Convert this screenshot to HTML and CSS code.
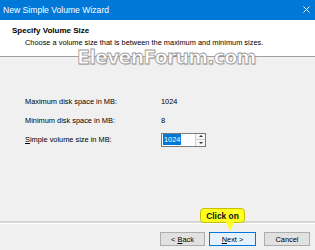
FILE: index.html
```html
<!DOCTYPE html>
<html>
<head>
    <title>New Simple Volume Wizard</title>
    <link rel="stylesheet" href="styles.css">
</head>
<body>
    <div class="window">
        <div class="titlebar">
            <span class="title">New Simple Volume Wizard</span>
            <svg class="close" width="7" height="7" viewBox="0 0 7 7">
                <path d="M0.5 0.5 L6.5 6.5 M6.5 0.5 L0.5 6.5" stroke="#ffffff" stroke-width="1"/>
            </svg>
        </div>
        <div class="header">
            <h1>Specify Volume Size</h1>
            <p>Choose a volume size that is between the maximum and minimum sizes.</p>
        </div>
        <div class="content">
            <div class="fields">
                <span>Maximum disk space in MB:</span>
                <span>1024</span>
                <span>Minimum disk space in MB:</span>
                <span>8</span>
                <span><u>S</u>imple volume size in MB:</span>
                <div class="spinner">
                    <span class="value"><span class="selected">1024</span></span>
                    <div class="arrows">
                        <div class="arrow up"></div>
                        <div class="arrow down"></div>
                    </div>
                </div>
            </div>
        </div>
        <div class="footer">
            <div class="separator"></div>
            <div class="buttons">
                <button class="back" type="button">&lt; <u>B</u>ack</button>
                <button class="next" type="button"><u>N</u>ext &gt;</button>
                <button class="cancel" type="button">Cancel</button>
            </div>
        </div>
        <div class="watermark">ElevenForum.com</div>
        <div class="callout">Click on</div>
    </div>
</body>
</html>
```

FILE: styles.css
```css
* {
    box-sizing: border-box;
}
body {
    margin: 0;
    font-family: "Liberation Sans", Arial, sans-serif;
    background-color: #f0f0f0;
}
.window {
    position: relative;
    width: 315px;
    height: 250px;
    display: flex;
    flex-direction: column;
    background-color: #f0f0f0;
    overflow: hidden;
}
.titlebar {
    height: 20px;
    flex: none;
    display: flex;
    align-items: center;
    justify-content: space-between;
    padding: 0 5px 1px 3px;
    background-color: #0078d7;
    color: white;
    font-size: 8.6px;
}
.header {
    height: 37px;
    flex: none;
    padding: 6px 0 0 12px;
    background-color: white;
    border-bottom: 1px solid #a0a0a0;
}
.header h1 {
    margin: 0;
    font-size: 8px;
    font-weight: bold;
    color: #000;
}
.header p {
    margin: 3px 0 0 13px;
    font-size: 7.4px;
    color: #000;
}
.content {
    flex: 1;
    padding: 35px 0 0 25px;
}
.fields {
    display: grid;
    grid-template-columns: 136px auto;
    grid-auto-rows: 19px;
    align-items: center;
    font-size: 7.4px;
    color: #000;
}
.spinner {
    width: 45px;
    height: 14px;
    display: flex;
    background-color: white;
    border: 1px solid #7a7a7a;
}
.spinner .value {
    flex: 1;
    display: flex;
    align-items: center;
    padding-left: 1px;
}
.spinner .selected {
    background-color: #0078d7;
    color: white;
    padding: 1px 1px;
}
.spinner .arrows {
    width: 10px;
    display: flex;
    flex-direction: column;
    border-left: 1px solid #d0d0d0;
}
.spinner .arrow {
    flex: 1;
    display: flex;
    align-items: center;
    justify-content: center;
    background-color: #f6f6f6;
}
.spinner .arrow.up {
    border-bottom: 1px solid #d0d0d0;
}
.spinner .arrow::after {
    content: "";
    border-left: 2px solid transparent;
    border-right: 2px solid transparent;
}
.spinner .arrow.up::after {
    border-bottom: 2px solid #333;
}
.spinner .arrow.down::after {
    border-top: 2px solid #333;
}
.footer {
    height: 29px;
    flex: none;
}
.separator {
    height: 3px;
    background-color: #d6d6d6;
    border-bottom: 1px solid white;
}
.buttons {
    display: flex;
    justify-content: flex-end;
    padding: 8px 5px 0 0;
}
.buttons button {
    height: 14px;
    padding: 0;
    font-family: "Liberation Sans", Arial, sans-serif;
    font-size: 7.4px;
    color: #000;
    background-color: #e1e1e1;
    border: 1px solid #adadad;
}
.buttons .back {
    width: 45px;
}
.buttons .next {
    width: 47px;
    margin-left: 4px;
    border-color: #0078d7;
    background-color: #e5f1fb;
}
.buttons .cancel {
    width: 46px;
    margin-left: 8px;
}
.watermark {
    position: absolute;
    left: 77px;
    top: 46px;
    font-family: "DejaVu Sans", sans-serif;
    font-size: 19px;
    font-weight: bold;
    letter-spacing: -0.8px;
    color: white;
    -webkit-text-stroke: 0.8px #9a9a9a;
    text-shadow: 1px 1px 1px rgba(0, 0, 0, 0.15);
}
.callout {
    position: absolute;
    left: 200px;
    top: 208px;
    width: 45px;
    height: 15px;
    display: flex;
    align-items: center;
    justify-content: center;
    font-size: 8.4px;
    font-weight: bold;
    color: #111;
    background-color: #ffff22;
    border: 1px solid #c8c000;
    border-radius: 4px;
}
.callout::after {
    content: "";
    position: absolute;
    left: 25px;
    top: 13px;
    border-left: 4px solid transparent;
    border-right: 4px solid transparent;
    border-top: 9px solid #ffff22;
}
```
